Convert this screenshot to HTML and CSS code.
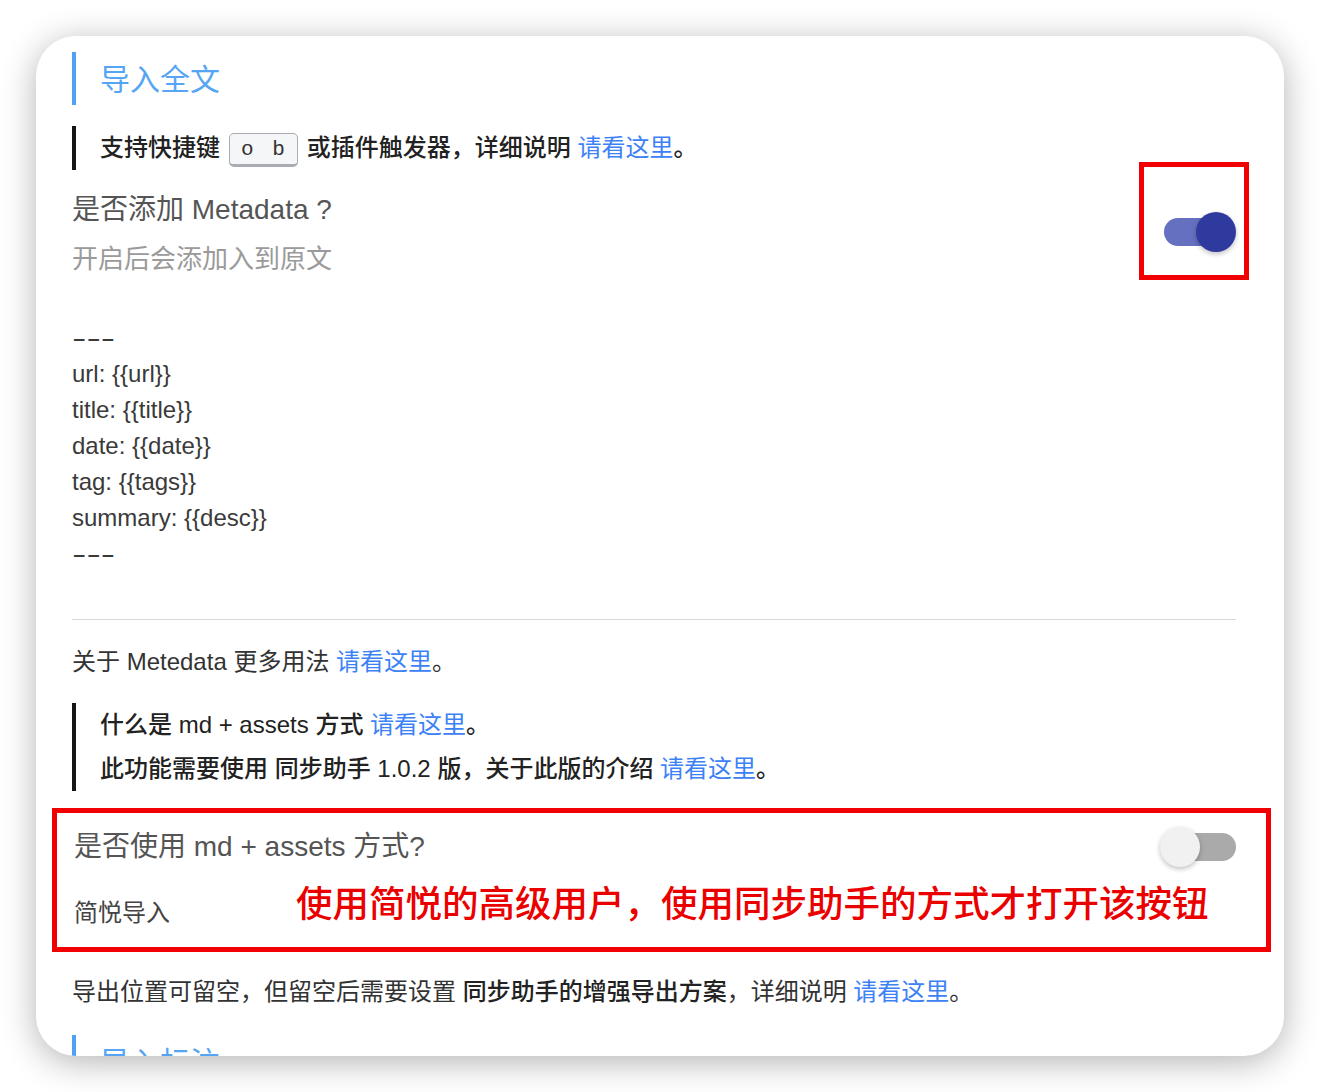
FILE: index.html
```html
<!DOCTYPE html>
<html lang="zh-CN">
<head>
<meta charset="utf-8">
<title>导入全文</title>
<link rel="stylesheet" href="styles.css">
</head>
<body>
<div class="card">
  <h2 class="section-title">导入全文</h2>
  <blockquote class="note">
    <p>支持快捷键<kbd>o b</kbd>或插件触发器，详细说明 <a href="#">请看这里</a>。</p>
  </blockquote>

  <div class="setting">
    <div class="setting-text">
      <div class="setting-label">是否添加 Metadata ?</div>
      <div class="setting-desc">开启后会添加入到原文</div>
    </div>
    <div class="toggle-wrap">
      <span class="toggle on"><span class="track"></span><span class="thumb"></span></span>
    </div>
  </div>

  <div class="meta-template">
    <div><span class="dash">---</span></div>
    <div>url: {{url}}</div>
    <div>title: {{title}}</div>
    <div>date: {{date}}</div>
    <div>tag: {{tags}}</div>
    <div>summary: {{desc}}</div>
    <div><span class="dash">---</span></div>
  </div>

  <hr class="divider">

  <p class="para">关于 Metedata 更多用法 <a href="#">请看这里</a>。</p>

  <blockquote class="note note-second">
    <p>什么是 md + assets 方式 <a href="#">请看这里</a>。</p>
    <p>此功能需要使用 同步助手 1.0.2 版，关于此版的介绍 <a href="#">请看这里</a>。</p>
  </blockquote>

  <div class="setting-box">
    <div class="setting-head">
      <div class="setting-label">是否使用 md + assets 方式?</div>
      <span class="toggle off"><span class="track"></span><span class="thumb"></span></span>
    </div>
    <div class="setting-foot">
      <span class="setting-sub">简悦导入</span>
      <span class="annotation">使用简悦的高级用户，使用同步助手的方式才打开该按钮</span>
    </div>
  </div>

  <p class="para para-export">导出位置可留空，但留空后需要设置 <strong>同步助手的增强导出方案</strong>，详细说明 <a href="#">请看这里</a>。</p>

  <h2 class="section-title section-next">导入标注</h2>
</div>
</body>
</html>
```

FILE: styles.css
```css
* { box-sizing: border-box; }

html, body {
  margin: 0;
  padding: 0;
  background: #ffffff;
}

body {
  font-family: "Liberation Sans", "Noto Sans CJK SC", sans-serif;
  font-size: 24px;
  color: #333333;
}

.card {
  margin: 36px;
  width: 1248px;
  height: 1020px;
  overflow: hidden;
  background: #ffffff;
  border-radius: 40px;
  box-shadow: 0 6px 34px rgba(0, 0, 0, 0.3);
  padding: 16px 48px 0 36px;
}

a {
  color: #3c82f6;
  text-decoration: none;
  font-weight: normal;
}

.section-title {
  margin: 0;
  height: 53px;
  line-height: 55px;
  border-left: 4px solid #4ea1f3;
  padding-left: 24px;
  font-size: 30px;
  font-weight: normal;
  color: #56a5f4;
}

.section-next {
  margin-top: 21px;
}

.note {
  margin: 21px 0 0;
  border-left: 4px solid #161616;
  padding-left: 24px;
  font-weight: 500;
  color: #222222;
}

.note p {
  margin: 0;
  line-height: 44px;
}

.note-second {
  margin-top: 19px;
}

kbd {
  display: inline-block;
  height: 34px;
  line-height: 32px;
  padding: 0 9px 0 11px;
  margin: 0 9px;
  border: 1px solid #a9adb3;
  border-bottom-width: 3px;
  border-radius: 5px;
  background: #f5f6f8;
  font-family: "Liberation Mono", monospace;
  font-size: 21px;
  letter-spacing: 3px;
  font-weight: normal;
  color: #333333;
  vertical-align: middle;
}

.setting {
  display: flex;
  align-items: center;
  justify-content: space-between;
  margin-top: 20px;
}

.setting-label {
  font-size: 28px;
  line-height: 40px;
  color: #555555;
}

.setting-desc {
  font-size: 26px;
  line-height: 40px;
  margin-top: 9px;
  color: #9a9a9a;
}

.toggle-wrap {
  position: relative;
  margin-bottom: 5px;
}

.toggle-wrap::after {
  content: "";
  position: absolute;
  left: -21px;
  right: -13px;
  top: -50px;
  bottom: -28px;
  border: 5px solid #f00000;
}

.toggle {
  position: relative;
  display: block;
  width: 76px;
  height: 40px;
}

.toggle .track {
  position: absolute;
  left: 4px;
  right: 4px;
  top: 6px;
  height: 28px;
  border-radius: 14px;
  background: #aaaaaa;
}

.toggle .thumb {
  position: absolute;
  top: 0;
  left: 0;
  width: 40px;
  height: 40px;
  border-radius: 50%;
  background: #f1f1f1;
  box-shadow: 0 2px 5px rgba(0, 0, 0, 0.25);
}

.toggle.on .track {
  background: #6570c0;
}

.toggle.on .thumb {
  left: auto;
  right: 0;
  background: #2f3a9f;
}

.toggle.off .track {
  right: 0;
}

.meta-template {
  margin-top: 41px;
  font-size: 24px;
  line-height: 36px;
  color: #3a3a3a;
}

.dash {
  display: inline-block;
  transform: scaleX(1.8);
  transform-origin: left center;
}

.divider {
  margin: 47px 0 0;
  border: 0;
  border-top: 1px solid #d9d9d9;
  height: 0;
}

.para {
  margin: 20px 0 0;
  line-height: 44px;
}

.para strong {
  font-weight: 500;
  color: #222222;
}

.para-export {
  margin-top: 18px;
}

.setting-box {
  margin: 17px -35px 0 -20px;
  border: 5px solid #f00000;
  padding: 14px 30px 17px 17px;
}

.setting-head {
  display: flex;
  align-items: center;
  justify-content: space-between;
}

.setting-foot {
  display: flex;
  align-items: flex-end;
  margin-top: 13px;
}

.setting-sub {
  font-size: 24px;
  line-height: 34px;
  color: #444444;
}

.annotation {
  margin-left: 126px;
  font-size: 36.5px;
  line-height: 50px;
  font-weight: 500;
  color: #eb0000;
}
```
